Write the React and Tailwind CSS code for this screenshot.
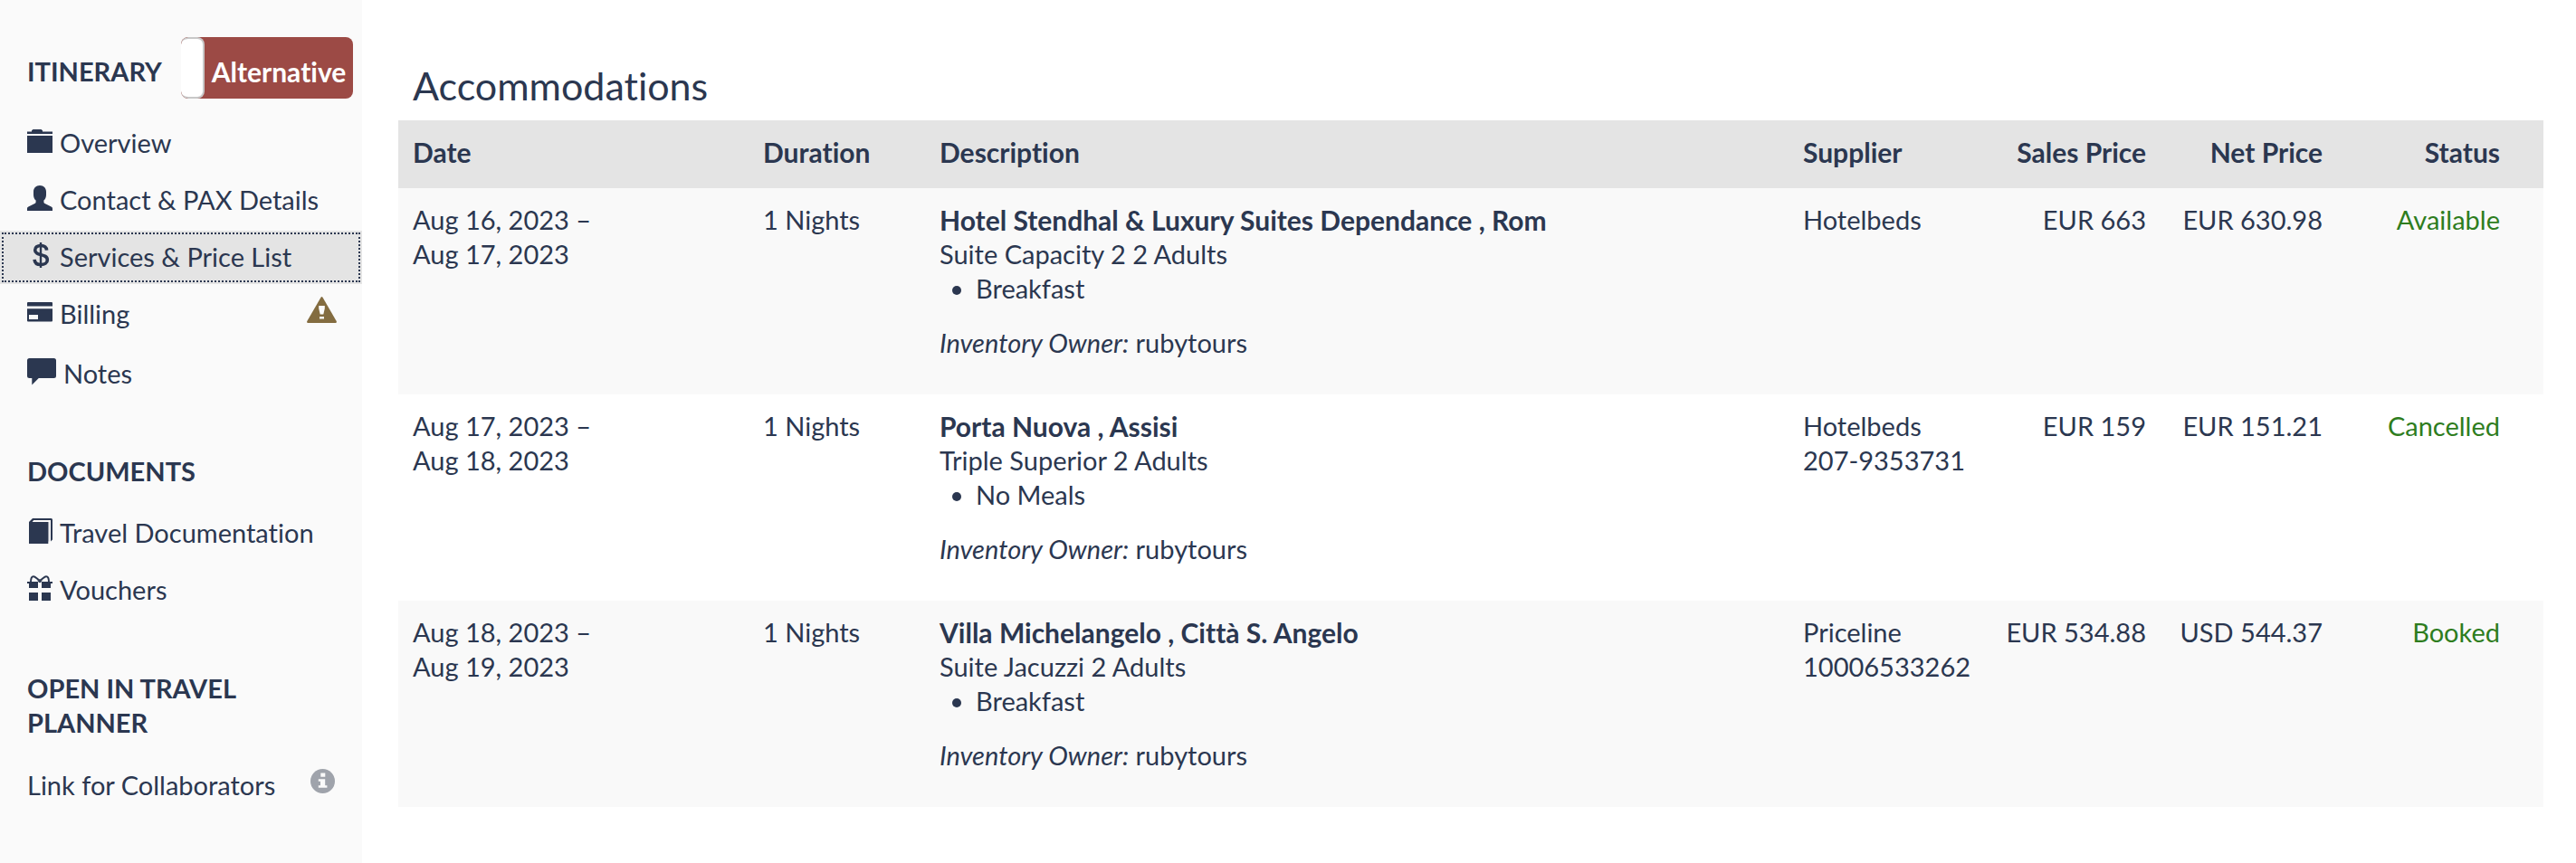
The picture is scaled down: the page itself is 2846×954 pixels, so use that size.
import React, { useState } from 'react';

function FolderIcon() {
  return (
    <svg width="28" height="28" viewBox="0 0 28 28" fill="currentColor" aria-hidden="true">
      <path d="M0 3.5h5V2.3L6.5 1h9L17 2.3v1.2h11V6H0zM0 8h28v19H0z" />
    </svg>
  );
}

function UserIcon() {
  return (
    <svg width="28" height="28" viewBox="0 0 28 28" fill="currentColor" aria-hidden="true">
      <path d="M14 0c4.4 0 7 3 7 7v3.5c0 2.6-1 4.7-2.6 6v1.7c0 .9.4 1.3 1.2 1.7l7 3.6c1 .6 1.4 1 1.4 2.2V28H0v-2.3c0-1.2.4-1.6 1.4-2.2l7-3.6c.8-.4 1.2-.8 1.2-1.7v-1.7C8 15.2 7 13.1 7 10.5V7c0-4 2.6-7 7-7z" />
    </svg>
  );
}

function DollarIcon() {
  return (
    <svg width="28" height="28" viewBox="0 0 28 28" fill="none" stroke="currentColor" aria-hidden="true">
      <path d="M15 0v28" strokeWidth="2.4" />
      <path d="M21.6 8.6c-.3-3.3-2.8-5.1-6.5-5.1-3.8 0-6.4 1.8-6.4 4.9 0 7.2 13.6 3.2 13.6 11 0 3.2-2.9 5.1-7 5.1-4.3 0-7-2.1-7.2-5.7" strokeWidth="3.6" />
    </svg>
  );
}

function CardIcon() {
  return (
    <svg width="28" height="28" viewBox="0 0 28 28" fill="currentColor" aria-hidden="true">
      <path d="M1 3h26q1 0 1 1v3.5H0V4q0-1 1-1z" />
      <path fillRule="evenodd" d="M0 10.3h28v13.2q0 1-1 1H1q-1 0-1-1zM2 17v5h10v-5z" />
    </svg>
  );
}

function CommentIcon() {
  return (
    <svg width="32" height="30" viewBox="0 0 32 30" fill="currentColor" aria-hidden="true">
      <path d="M2.5 0h27Q32 0 32 2.5v17q0 2.5-2.5 2.5H12.8l-7.5 7.6V22H2.5Q0 22 0 19.5v-17Q0 0 2.5 0z" />
    </svg>
  );
}

function BookIcon() {
  return (
    <svg width="28" height="28" viewBox="0 0 28 28" fill="currentColor" aria-hidden="true">
      <path d="M2 4 6 0h20.5Q28 0 28 1.5v22l-2 2V2H7.2L5.6 4h17.7v24H2z" />
      <path d="M23.3 4h1v21.5h-1z" opacity=".35" />
    </svg>
  );
}

function GiftIcon() {
  return (
    <svg width="28" height="28" viewBox="0 0 28 28" fill="currentColor" aria-hidden="true">
      <path d="M0 7h12v7H2V9H0zM16 7h12v2h-2v5H16zM2 19h10v9H2zM16 19h10v9H16z" />
      <path d="M4 7.5C4 4 5 1.2 7 1.2S10.8 4 14 5.8C17.2 4 19 1.2 21 1.2s3 2.8 3 6.3" fill="none" stroke="currentColor" strokeWidth="2" />
      <path d="M11 5l3 1.4L17 5l-2 3h-2z" />
    </svg>
  );
}

function WarningIcon() {
  return (
    <svg width="33" height="29" viewBox="0 0 33 29" className="text-[#836c40]" aria-label="Warning" role="img">
      <path fill="currentColor" d="M15.5.8q1-1.4 2 0L32.7 27q.7 2-1 2H1.300q-1.700 0-1-2z" />
      <path fill="#fafafa" d="M13.2 10h6.6v3l-1.500 6.500h-3.600L13.2 13zM14 22h5v2.600h-5z" />
    </svg>
  );
}

function InfoIcon() {
  return (
    <svg width="27" height="27" viewBox="0 0 27 27" className="text-[#9fa3ab]" aria-label="Info" role="img">
      <circle cx="13.5" cy="13.5" r="13.5" fill="currentColor" />
      <path fill="#fafafa" d="M11.3 4.5h5v4.2h-5zM8.8 11.2h7.4v7h2.2v2.6H8.8v-2.6H11v-4.4H8.8z" />
    </svg>
  );
}

const itineraryLinks = [
  { label: 'Overview', icon: FolderIcon },
  { label: 'Contact & PAX Details', icon: UserIcon },
  { label: 'Services & Price List', icon: DollarIcon, active: true },
  { label: 'Billing', icon: CardIcon, warning: true },
  { label: 'Notes', icon: CommentIcon, tall: true },
];

const documentLinks = [
  { label: 'Travel Documentation', icon: BookIcon },
  { label: 'Vouchers', icon: GiftIcon },
];

const services = [
  {
    from: 'Aug 16, 2023',
    to: 'Aug 17, 2023',
    hotel: 'Hotel Stendhal & Luxury Suites Dependance , Rom',
    room: 'Suite Capacity 2 2 Adults',
    meals: 'Breakfast',
    supplier: 'Hotelbeds',
    sales: 'EUR 663',
    net: 'EUR 630.98',
    status: 'Available',
  },
  {
    from: 'Aug 17, 2023',
    to: 'Aug 18, 2023',
    hotel: 'Porta Nuova , Assisi',
    room: 'Triple Superior 2 Adults',
    meals: 'No Meals',
    supplier: 'Hotelbeds',
    reference: '207-9353731',
    sales: 'EUR 159',
    net: 'EUR 151.21',
    status: 'Cancelled',
  },
  {
    from: 'Aug 18, 2023',
    to: 'Aug 19, 2023',
    hotel: 'Villa Michelangelo , Città S. Angelo',
    room: 'Suite Jacuzzi 2 Adults',
    meals: 'Breakfast',
    supplier: 'Priceline',
    reference: '10006533262',
    sales: 'EUR 534.88',
    net: 'USD 544.37',
    status: 'Booked',
  },
];

function NavItem({ item }) {
  let look = 'min-h-[59px]';
  if (item.active) look = 'min-h-[59px] bg-[#e4e4e4] outline-2 -outline-offset-4 outline-dotted outline-[#2b3750]';
  if (item.tall) look = 'min-h-[65px]';

  return (
    <li>
      <a
        href="#"
        aria-current={item.active ? 'page' : undefined}
        className={`flex items-center gap-2 pb-0.5 pl-[30px] pr-7 ${look}`}
      >
        <span className="pb-1"><item.icon /></span>
        {item.label}
        {item.warning && <span className="ml-auto pb-2"><WarningIcon /></span>}
      </a>
    </li>
  );
}

function Sidebar() {
  const [alternative, setAlternative] = useState(true);

  return (
    <aside className="w-[400px] shrink-0 bg-[#fafafa] pt-[41px]">
      <div className="flex items-center justify-between pl-[30px] pr-[10px]">
        <h2 className="pt-2 font-bold">ITINERARY</h2>
        <label className="flex h-[68px] w-[190px] cursor-pointer overflow-hidden rounded-lg bg-[#9c4a45] font-bold text-white">
          <input
            type="checkbox"
            className="sr-only"
            checked={alternative}
            onChange={(e) => setAlternative(e.target.checked)}
          />
          <span className="w-[26px] shrink-0 rounded-lg border-2 border-l-0 border-[#c8c8c8] bg-white"></span>
          <span className="flex grow items-center justify-center pt-2 text-[30px]">Alternative</span>
        </label>
      </div>

      <nav aria-label="Itinerary" className="mt-5">
        <ul className="flex flex-col gap-1">
          {itineraryLinks.map((item) => <NavItem key={item.label} item={item} />)}
        </ul>
      </nav>

      <h2 className="mt-14 px-[30px] font-bold">DOCUMENTS</h2>
      <nav aria-label="Documents" className="mt-5">
        <ul className="flex flex-col gap-1">
          {documentLinks.map((item) => <NavItem key={item.label} item={item} />)}
        </ul>
      </nav>

      <h2 className="mt-15 px-[30px] font-bold">OPEN IN TRAVEL PLANNER</h2>
      <div className="mt-5 flex min-h-[59px] items-center justify-between px-[30px]">
        <a href="#">Link for Collaborators</a>
        <span className="pb-2"><InfoIcon /></span>
      </div>
    </aside>
  );
}

function ServicesTable() {
  return (
    <table className="w-full table-fixed text-left">
      <colgroup>
        <col className="w-[387px]" />
        <col className="w-[195px]" />
        <col />
        <col className="w-[216px]" />
        <col className="w-[195px]" />
        <col className="w-[195px]" />
        <col className="w-[228px]" />
      </colgroup>
      <thead className="bg-[#e4e4e4] text-[30px]">
        <tr className="h-[75px] align-top">
          <th className="px-4 pt-4 font-bold">Date</th>
          <th className="px-4 pt-4 font-bold">Duration</th>
          <th className="px-4 pt-4 font-bold">Description</th>
          <th className="px-4 pt-4 font-bold">Supplier</th>
          <th className="px-4 pt-4 text-right font-bold">Sales Price</th>
          <th className="px-4 pt-4 text-right font-bold">Net Price</th>
          <th className="pl-4 pr-12 pt-4 text-right font-bold">Status</th>
        </tr>
      </thead>
      <tbody>
        {services.map((s) => (
          <tr key={s.from} className="align-top odd:bg-[#f9f9f9]">
            <td className="px-4 pt-4">{s.from} –<br />{s.to}</td>
            <td className="px-4 pt-4">1 Nights</td>
            <td className="px-4 pt-4 pb-[38px]">
              <div className="text-[30px] font-bold">{s.hotel}</div>
              <div>{s.room}</div>
              <ul className="list-disc pl-10">
                <li>{s.meals}</li>
              </ul>
              <p className="mt-[22px]"><em>Inventory Owner:</em> rubytours</p>
            </td>
            <td className="pl-4 pt-4">
              {s.supplier}
              {s.reference && <div>{s.reference}</div>}
            </td>
            <td className="px-4 pt-4 text-right">{s.sales}</td>
            <td className="px-4 pt-4 text-right">{s.net}</td>
            <td className="pl-4 pr-12 pt-4 text-right text-[#2e7d1e]">{s.status}</td>
          </tr>
        ))}
      </tbody>
    </table>
  );
}

export default function App() {
  return (
    <div className="flex min-h-screen bg-white font-['Lato',sans-serif] text-[29px] leading-[38px] text-[#2b3750] [font-variant-ligatures:none]">
      <Sidebar />
      <main className="min-w-0 grow pl-10 pr-9 pt-[68px]">
        <h1 className="px-4 pb-3 text-[43px] leading-[53px]">Accommodations</h1>
        <ServicesTable />
      </main>
    </div>
  );
}
